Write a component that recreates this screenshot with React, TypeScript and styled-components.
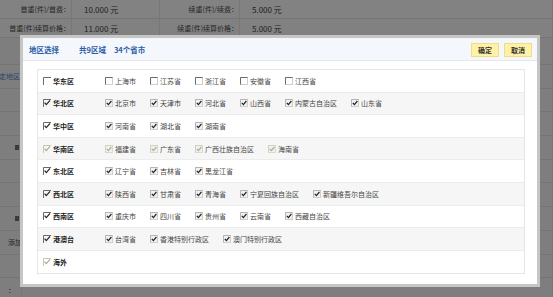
import React from "react";
import styled, { createGlobalStyle } from "styled-components";

const Global = createGlobalStyle`
  html, body { margin: 0; padding: 0; background: #7c7c7c; }
  body { font-family: "Noto Sans CJK SC", "Noto Sans", sans-serif; }
  * { box-sizing: border-box; }
`;

const Page = styled.div`
  position: relative;
  width: 553px;
  height: 297px;
  overflow: hidden;
  background: #7d7d7d;
  font-size: 7px;
  color: #222;
`;

/* ---------- background form (under the overlay) ---------- */
const BgForm = styled.div`
  display: flex;
  flex-direction: column;
`;

const BgRow = styled.div<{ $h: number; $tone?: string; $narrow?: boolean }>`
  display: grid;
  grid-template-columns: ${(p) => (p.$narrow ? "22px 1fr" : "72px 88px 80px 1fr")};
  height: ${(p) => p.$h}px;
  flex: none;
  border-bottom: 1px solid #747474;
  background: ${(p) => p.$tone || "#7e7e7e"};
`;

const BgLabel = styled.div<{ $color?: string; $start?: boolean }>`
  display: flex;
  align-items: center;
  justify-content: ${(p) => (p.$start ? "flex-start" : "flex-end")};
  padding: ${(p) => (p.$start ? "0 0 0 8px" : "0 1px 0 0")};
  white-space: nowrap;
  color: ${(p) => p.$color || "#242424"};
  border-right: 1px solid #777;
`;

const BgValue = styled.div`
  display: flex;
  align-items: center;
  padding-left: 12px;
  white-space: nowrap;
  color: #1e1e1e;
  font-size: 8px;
  border-right: 1px solid #777;
`;

const Dot = styled.span`
  display: inline-block;
  width: 4px;
  height: 5px;
  margin-right: 1px;
  background: #3b3b3b;
`;

/* ---------- dialog ---------- */
const Dialog = styled.div`
  position: absolute;
  left: 20px;
  top: 35px;
  width: 520px;
  height: 252px;
  border: 3px solid #c6c6c6;
  background: #fff;
  display: flex;
  flex-direction: column;
`;

const Header = styled.div`
  height: 23px;
  display: flex;
  align-items: center;
  justify-content: space-between;
  padding: 0 5px 0 6px;
  background: #f4f7fb;
  border-bottom: 1px solid #e4e9f0;
`;

const Title = styled.div`
  display: flex;
  align-items: center;
  color: #2a5da6;
  font-weight: 700;
  font-size: 7.5px;
`;

const TitlePart = styled.span<{ $gap: number }>`
  margin-right: ${(p) => p.$gap}px;
`;

const Buttons = styled.div`
  display: flex;
  gap: 5px;
  padding-top: 2px;
`;

const Btn = styled.button`
  width: 28px;
  height: 14px;
  padding: 0;
  border: 1px solid #f1de83;
  background: #fff1a6;
  color: #333;
  font-family: inherit;
  font-size: 7px;
  font-weight: 700;
  display: flex;
  align-items: center;
  justify-content: center;
`;

const Body = styled.div`
  flex: 1;
  padding: 8px 12px 0 14px;
`;

const Table = styled.div`
  border: 1px solid #e6e6e6;
  display: flex;
  flex-direction: column;
`;

const Row = styled.div<{ $alt: boolean }>`
  height: 22.6px;
  display: flex;
  align-items: center;
  background: ${(p) => (p.$alt ? "#f6f6f6" : "#fff")};
  border-bottom: 1px solid #ececec;
  &:last-child { border-bottom: none; }
`;

const RegionCell = styled.div`
  width: 62px;
  padding-left: 5px;
  display: flex;
  align-items: center;
  gap: 2px;
  font-weight: 700;
  color: #222;
`;

const Items = styled.div`
  display: flex;
  align-items: center;
  padding-left: 5px;
`;

const Item = styled.label`
  display: inline-flex;
  align-items: center;
  gap: 2px;
  margin-right: 14px;
  color: #444;
  white-space: nowrap;
`;

const Box = styled.svg`
  width: 8px;
  height: 8px;
  flex: none;
  display: block;
`;

type CheckProps = { checked: boolean; dim?: boolean; kind: "region" | "item" };

const Check = ({ checked, dim, kind }: CheckProps) => {
  const frame = dim ? "#c4c7b4" : "#6a6a6a";
  const mark = dim ? "#a9ae92" : "#222";
  if (kind === "region") {
    return (
      <Box viewBox="0 0 8 8">
        <path d="M0.5 8 V0.5 H8" fill="none" stroke={frame} strokeWidth={1} />
        {checked && (
          <path d="M1.6 3.6 L3.3 5.6 L7 1.4" fill="none" stroke={mark} strokeWidth={1.2} />
        )}
      </Box>
    );
  }
  return (
    <Box viewBox="0 0 8 8">
      <rect x={0.5} y={0.5} width={7} height={7} fill={checked ? "#f1f1f1" : "#fff"} stroke={dim ? "#d8dacb" : "#cfcfcf"} />
      <path d="M0.5 7.5 V0.5 H7.5" fill="none" stroke={checked ? (dim ? "#d0d3c0" : "#b5b5b5") : frame} strokeWidth={1} />
      {checked && (
        <path d="M1.8 3.8 L3.4 5.6 L6.4 2" fill="none" stroke={mark} strokeWidth={1.2} />
      )}
    </Box>
  );
};

type Region = { name: string; checked: boolean; dim?: boolean; items: string[] };

const regions: Region[] = [
  { name: "华东区", checked: false, items: ["上海市", "江苏省", "浙江省", "安徽省", "江西省"] },
  { name: "华北区", checked: true, items: ["北京市", "天津市", "河北省", "山西省", "内蒙古自治区", "山东省"] },
  { name: "华中区", checked: true, items: ["河南省", "湖北省", "湖南省"] },
  { name: "华南区", checked: true, dim: true, items: ["福建省", "广东省", "广西壮族自治区", "海南省"] },
  { name: "东北区", checked: true, items: ["辽宁省", "吉林省", "黑龙江省"] },
  { name: "西北区", checked: true, items: ["陕西省", "甘肃省", "青海省", "宁夏回族自治区", "新疆维吾尔自治区"] },
  { name: "西南区", checked: true, items: ["重庆市", "四川省", "贵州省", "云南省", "西藏自治区"] },
  { name: "港澳台", checked: true, items: ["台湾省", "香港特别行政区", "澳门特别行政区"] },
  { name: "海外", checked: true, dim: true, items: [] },
];

type BgDef = { h: number; tone?: string; narrow?: boolean; start?: boolean; left?: React.ReactNode; color?: string; v1?: string; l2?: string; v2?: string };

const bgRows: BgDef[] = [
  { h: 19, tone: "#828282", left: "首重(件)/首费：", v1: "10.000 元", l2: "续重(件)/续费：", v2: "5.000 元" },
  { h: 19, tone: "#818181", left: "首重(件)续算价格：", v1: "11.000 元", l2: "续重(件)续算价格：", v2: "5.000 元" },
  { h: 27 },
  { h: 23.7, narrow: true, left: "定地区", color: "#2c3f63" },
  { h: 23.7, narrow: true },
  { h: 23.7, narrow: true },
  { h: 23.7, narrow: true, left: <Dot /> },
  { h: 23.7, narrow: true },
  { h: 23.7, narrow: true },
  { h: 23.7, narrow: true, left: <Dot /> },
  { h: 23.7, narrow: true, start: true, left: "添加组" },
  { h: 23.7, narrow: true },
  { h: 23.7, narrow: true, start: true, left: "：" },
];

export default function App() {
  return (
    <Page>
      <Global />
      <BgForm>
        {bgRows.map((r, i) => (
          <BgRow key={i} $h={r.h} $tone={r.tone} $narrow={r.narrow}>
            <BgLabel $color={r.color} $start={r.start}>{r.left}</BgLabel>
            {!r.narrow && (
              <>
                <BgValue>{r.v1}</BgValue>
                <BgLabel>{r.l2}</BgLabel>
                <BgValue>{r.v2}</BgValue>
              </>
            )}
            {r.narrow && <BgValue />}
          </BgRow>
        ))}
      </BgForm>
      <Dialog>
        <Header>
          <Title>
            <TitlePart $gap={20}>地区选择</TitlePart>
            <TitlePart $gap={8}>共9区域</TitlePart>
            <TitlePart $gap={0}>34个省市</TitlePart>
          </Title>
          <Buttons>
            <Btn>确定</Btn>
            <Btn>取消</Btn>
          </Buttons>
        </Header>
        <Body>
          <Table>
            {regions.map((r, i) => (
              <Row key={r.name} $alt={i % 2 === 1}>
                <RegionCell>
                  <Check kind="region" checked={r.checked} dim={r.dim} />
                  <span>{r.name}</span>
                </RegionCell>
                <Items>
                  {r.items.map((it) => (
                    <Item key={it}>
                      <Check kind="item" checked={r.checked} dim={r.dim} />
                      <span>{it}</span>
                    </Item>
                  ))}
                </Items>
              </Row>
            ))}
          </Table>
        </Body>
      </Dialog>
    </Page>
  );
}
